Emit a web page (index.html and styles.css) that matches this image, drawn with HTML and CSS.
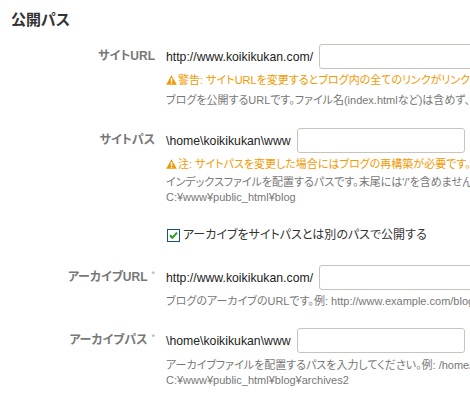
FILE: index.html
```html
<!DOCTYPE html>
<html lang="ja">
<head>
<meta charset="utf-8">
<title>公開パス</title>
<link rel="stylesheet" href="styles.css">
</head>
<body>
<div class="page">
  <h2 class="title">公開パス</h2>

  <div class="row row-1">
    <div class="label">サイトURL</div>
    <div class="field">
      <div class="line"><span class="val">http://www.koikikukan.com/</span><input class="text" type="text"></div>
      <div class="warn warn-1"><svg class="alert" width="11" height="10" viewBox="0 0 11 10"><path d="M5.5 0.3 L10.8 9.7 L0.2 9.7 Z" fill="#f39800"/><rect x="4.8" y="3" width="1.5" height="3.8" fill="#fff"/><rect x="4.8" y="7.6" width="1.5" height="1.3" fill="#fff"/></svg>警告: サイトURLを変更するとブログ内の全てのリンクがリンク切れになります。</div>
      <div class="desc desc-1">ブログを公開するURLです。ファイル名(index.htmlなど)は含めず、末尾は'/'で終わります。</div>
    </div>
  </div>

  <div class="row row-2">
    <div class="label">サイトパス</div>
    <div class="field">
      <div class="line"><span class="val">\home\koikikukan\www</span><input class="text" type="text"></div>
      <div class="warn warn-2"><svg class="alert" width="11" height="10" viewBox="0 0 11 10"><path d="M5.5 0.3 L10.8 9.7 L0.2 9.7 Z" fill="#f39800"/><rect x="4.8" y="3" width="1.5" height="3.8" fill="#fff"/><rect x="4.8" y="7.6" width="1.5" height="1.3" fill="#fff"/></svg>注: サイトパスを変更した場合にはブログの再構築が必要です。</div>
      <div class="desc desc-2">インデックスファイルを配置するパスです。末尾には'/'を含めません。例: /home/melody/public_html/blog<br>C:¥www¥public_html¥blog</div>
    </div>
  </div>

  <div class="row row-check">
    <div class="label"></div>
    <div class="field">
      <label class="check"><svg class="box" width="13" height="13" viewBox="0 0 13 13"><rect x="0.5" y="0.5" width="12" height="12" fill="#fff" stroke="#1c5180"/><path d="M3 6.3 L5.3 8.8 L10 3.6" fill="none" stroke="#21a121" stroke-width="2"/></svg>アーカイブをサイトパスとは別のパスで公開する</label>
    </div>
  </div>

  <div class="row row-3">
    <div class="label">アーカイブURL<span class="req">*</span></div>
    <div class="field">
      <div class="line"><span class="val">http://www.koikikukan.com/</span><input class="text" type="text"></div>
      <div class="desc desc-3">ブログのアーカイブのURLです。例: http://www.example.com/blog/archives/</div>
    </div>
  </div>

  <div class="row row-4">
    <div class="label">アーカイブパス<span class="req">*</span></div>
    <div class="field">
      <div class="line"><span class="val">\home\koikikukan\www</span><input class="text" type="text"></div>
      <div class="desc desc-4">アーカイブファイルを配置するパスを入力してください。例: /home/melody/public_html/archives<br>C:¥www¥public_html¥blog¥archives2</div>
    </div>
  </div>
</div>
</body>
</html>
```

FILE: styles.css
```css
html, body {
  margin: 0;
  padding: 0;
  overflow: hidden;
  background: #fff;
}

body {
  font-family: "Liberation Sans", "Noto Sans CJK JP", sans-serif;
  font-feature-settings: "palt" 1;
  color: #333;
  width: 470px;
  height: 403px;
}

.page {
  padding: 10px 0 0 0;
  width: 700px;
}

.title {
  margin: 0 0 14px 11px;
  font-size: 15px;
  line-height: 20px;
  font-weight: bold;
  color: #333;
}

.row {
  display: grid;
  grid-template-columns: 155px auto;
  column-gap: 11px;
  margin-bottom: 20px;
}

.row-2 { margin-bottom: 22px; }
.row-check { margin-bottom: 22px; }
.row-3 { margin-bottom: 19px; }

.label {
  text-align: right;
  font-size: 12px;
  line-height: 25px;
  font-weight: bold;
  color: #777;
  white-space: nowrap;
}

.req {
  font-size: 9px;
  font-weight: normal;
  color: #aaa;
  vertical-align: top;
  line-height: 18px;
  margin-left: 4px;
}

.field {
  display: flex;
  flex-direction: column;
  align-items: flex-start;
}

.line {
  display: flex;
  align-items: center;
  gap: 6px;
  height: 25px;
  white-space: nowrap;
}

.val {
  font-size: 12.25px;
  color: #222;
}

.text {
  box-sizing: border-box;
  width: 168px;
  height: 25px;
  margin: 0;
  padding: 2px 4px;
  border: 1px solid #cac3bc;
  border-radius: 3px;
  background: #fff;
  font: 12px "Liberation Sans", sans-serif;
}

.warn {
  display: flex;
  align-items: center;
  font-size: 11px;
  line-height: 16px;
  color: #f39800;
  white-space: nowrap;
  margin-top: 3px;
}

.alert {
  margin-right: 1px;
  flex: none;
}

.desc {
  font-size: 11px;
  line-height: 15px;
  color: #777;
  white-space: nowrap;
}

.desc-1 { margin-top: 5px; }
.desc-2 { margin-top: 3px; }
.desc-3 { margin-top: 4px; }
.desc-4 { margin-top: 5px; }

.check {
  display: flex;
  align-items: center;
  gap: 3px;
  font-size: 12px;
  line-height: 16px;
  color: #333;
  white-space: nowrap;
  padding-left: 1px;
}

.box {
  flex: none;
}
```
